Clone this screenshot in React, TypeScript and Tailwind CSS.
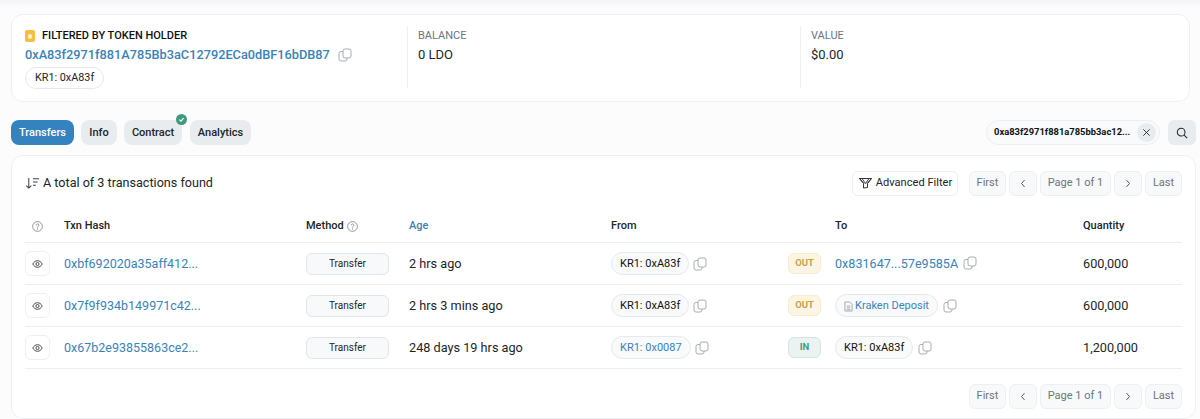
import React from "react";

const COLS = "grid grid-cols-[39px_242px_103px_202px_177px_47px_248px_1fr] items-center";

const Copy = ({ className = "" }: { className?: string }) => (
  <svg viewBox="0 0 14 14" className={`w-[14px] h-[14px] text-[#a8adb3] shrink-0 ${className}`} fill="none" stroke="currentColor" strokeWidth="1">
    <rect x="5" y="1" width="8" height="9" rx="2" />
    <path d="M5 3.500H3A2 2 0 0 0 1 5.500V11a2 2 0 0 0 2 2h4a2 2 0 0 0 2-2v-1" />
  </svg>
);

const Help = ({ className = "" }: { className?: string }) => (
  <svg viewBox="0 0 12 12" className={`w-[11px] h-[11px] text-[#6c757e] shrink-0 ${className}`} fill="none" stroke="currentColor" strokeWidth="0.800">
    <circle cx="6" cy="6" r="5.300" />
    <path d="M4.500 4.700a1.500 1.500 0 1 1 2.300 1.300c-.5.300-.8.600-.8 1.100" />
    <circle cx="6" cy="8.700" r="0.300" />
  </svg>
);

const Eye = () => (
  <svg viewBox="0 0 14 12" className="w-[11px] h-[10px]" fill="none" stroke="#3d4248" strokeWidth="1.200">
    <path d="M1 6c1.500-2.800 3.500-4.200 6-4.200S11.500 3.200 13 6c-1.500 2.800-3.500 4.200-6 4.200S2.500 8.800 1 6Z" />
    <circle cx="7" cy="6" r="2" />
  </svg>
);

const Pill = ({ children, blue }: { children: React.ReactNode; blue?: boolean }) => (
  <span className={`inline-flex items-center h-[23px] px-[8px] pt-px rounded-full border border-[#e6e9ec] bg-[#f9fafb] text-[11px] ${blue ? "text-[#3b82b8]" : "text-[#111]"}`}>
    {children}
  </span>
);

const PageBtns = () => {
  const cls = "h-[25px] flex items-center justify-center rounded-md border border-[#edf0f2] bg-[#f8f9fa] text-[11px] text-[#6c757e]";
  return (
    <div className="flex gap-[3px]">
      <span className={`${cls} w-[37px]`}>First</span>
      <span className={`${cls} w-[28px]`}>
        <svg viewBox="0 0 8 12" className="w-[6px] h-[9px]" fill="none" stroke="#495057" strokeWidth="1.300"><path d="M6 1.500 2 6l4 4.500" /></svg>
      </span>
      <span className={`${cls} w-[71px]`}>Page 1 of 1</span>
      <span className={`${cls} w-[28px]`}>
        <svg viewBox="0 0 8 12" className="w-[6px] h-[9px]" fill="none" stroke="#495057" strokeWidth="1.300"><path d="M2 1.500 6 6l-4 4.500" /></svg>
      </span>
      <span className={`${cls} w-[37px]`}>Last</span>
    </div>
  );
};

const Dir = ({ type }: { type: "OUT" | "IN" }) => (
  <span
    className={`inline-flex items-center justify-center w-[33px] h-[21px] rounded-md border text-[9.500px] font-bold ${
      type === "OUT" ? "bg-[#fdf5e3] border-[#f9ebcd] text-[#c9a04c]" : "bg-[#eaf3f1] border-[#d5e4e1] text-[#3f9a7e]"
    }`}
  >
    {type}
  </span>
);

const Row = ({ hash, from, dir, to, qty, age }: { hash: string; from: React.ReactNode; dir: "OUT" | "IN"; to: React.ReactNode; qty: string; age: string }) => (
  <div className={`${COLS} h-[42px] border-t border-[#edf0f2] text-[12.700px] text-[#212529]`}>
    <span className="w-[25px] h-[25px] rounded-md border border-[#edf0f2] bg-white flex items-center justify-center">
      <Eye />
    </span>
    <a className="text-[#3b82b8] text-[12.500px] pt-px">{hash}</a>
    <span className="w-[83px] h-[22px] rounded-md border border-[#e3e6e9] bg-[#f8f9fa] flex items-center justify-center text-[10px] text-[#212529]">
      Transfer
    </span>
    <span>{age}</span>
    <span className="flex items-center gap-[4px]">{from}<Copy /></span>
    <Dir type={dir} />
    <span className="flex items-center gap-[5px]">{to}<Copy /></span>
    <span>{qty}</span>
  </div>
);

export default function App() {
  return (
    <div className="w-[1200px] h-[419px] overflow-hidden bg-[#fcfcfd] font-['Roboto',sans-serif] flex flex-col">
      <div className="h-[8px] bg-gradient-to-b from-[#f3f4f6] to-[#fcfcfd]" />
      <div className="mt-[6px] ml-[11px] mr-[10px] h-[88px] bg-white rounded-xl border border-[#eef0f2] px-[13px] py-[11px] grid grid-cols-[383px_393px_1fr]">
        <div className="border-r border-[#eef0f2] h-[62px]">
          <div className="flex items-center gap-[7px] h-[14px] mt-[3px]">
            <span className="w-[10px] h-[12px] rounded-[2px] bg-[#f5bf3f] flex items-center justify-center">
              <span className="w-[4px] h-[5px] rounded-full bg-[#fdf0c8]" />
            </span>
            <span className="text-[11px] font-medium text-[#111]">FILTERED BY TOKEN HOLDER</span>
          </div>
          <div className="flex items-center gap-[8px] mt-[2px]">
            <span className="text-[12.750px] font-medium text-[#3b82b8]">0xA83f2971f881A785Bb3aC12792ECa0dBF16bDB87</span>
            <Copy />
          </div>
          <span className="inline-flex items-center mt-px h-[22px] px-[9px] rounded-full border border-[#e6e9ec] text-[10.800px] text-[#212529]">KR1: 0xA83f</span>
        </div>
        <div className="border-r border-[#eef0f2] h-[62px] pl-[10px] pt-[2px]">
          <div className="text-[11px] text-[#6c757e]">BALANCE</div>
          <div className="text-[13px] text-[#212529]">0 LDO</div>
        </div>
        <div className="pl-[10px] pt-[2px]">
          <div className="text-[11px] text-[#6c757e]">VALUE</div>
          <div className="text-[13px] text-[#212529]">$0.00</div>
        </div>
      </div>

      <div className="mt-[18px] ml-[11px] mr-[4px] h-[25px] flex items-center text-[11px] font-medium">
        <span className="w-[63px] h-[25px] pt-px rounded-lg bg-[#3482be] text-white flex items-center justify-center">Transfers</span>
        <span className="ml-[7px] w-[36px] h-[25px] pt-px rounded-lg bg-[#e9ecef] text-[#212529] flex items-center justify-center">Info</span>
        <span className="relative ml-[7px] w-[58px] h-[25px] pt-px rounded-lg bg-[#e9ecef] text-[#212529] flex items-center justify-center">
          Contract
          <span className="absolute -top-[6px] right-[-5px] w-[11px] h-[11px] rounded-full bg-[#3f9a7e] flex items-center justify-center">
            <svg viewBox="0 0 10 10" className="w-[7px] h-[7px]" fill="none" stroke="#fff" strokeWidth="1.600"><path d="M2 5.200 4.200 7.300 8 3" /></svg>
          </span>
        </span>
        <span className="ml-[8px] w-[61px] h-[25px] pt-px rounded-lg bg-[#e9ecef] text-[#212529] flex items-center justify-center">Analytics</span>
        <span className="ml-auto flex items-center w-[174px] h-[25px] rounded-full border border-[#eceff1] bg-[#f9fafb] pl-[7px] pr-[3px]">
          <span className="text-[9.400px] font-bold text-[#111] truncate w-[141px]">0xa83f2971f881a785bb3ac12...</span>
          <span className="ml-auto w-[19px] h-[19px] rounded-full bg-[#e9ecef] flex items-center justify-center">
            <svg viewBox="0 0 10 10" className="w-[9px] h-[9px]" fill="none" stroke="#212529" strokeWidth="1"><path d="M1.500 1.500l7 7M8.500 1.500l-7 7" /></svg>
          </span>
        </span>
        <span className="ml-[8px] w-[28px] h-[25px] rounded-md bg-[#e9ecef] flex items-center justify-center">
          <svg viewBox="0 0 14 14" className="w-[12px] h-[12px]" fill="none" stroke="#212529" strokeWidth="1.200"><circle cx="6" cy="6" r="4.500" /><path d="m9.500 9.500 3.500 3.500" /></svg>
        </span>
      </div>

      <div className="mt-[10px] ml-[11px] mr-[4px] flex-1 bg-white rounded-xl border border-[#eef0f2] px-[13px]">
        <div className="h-[54px] flex items-center">
          <svg viewBox="0 0 16 14" className="w-[15px] h-[13px]" fill="none" stroke="#3d4248" strokeWidth="1.100">
            <path d="M4 1v11M1.300 9.300 4 12l2.700-2.700M8.500 2h6.500M8.500 5.500h5M8.500 9h3" />
          </svg>
          <span className="ml-[3px] text-[12.600px] text-[#212529]">A total of 3 transactions found</span>
          <span className="ml-auto mr-[11px] flex items-center gap-[3px] h-[25px] w-[106px] justify-center rounded-md border border-[#edf0f2] bg-white text-[11.100px] text-[#212529]">
            <svg viewBox="0 0 14 12" className="w-[15px] h-[12px]" fill="none" stroke="#212529" strokeWidth="0.900" strokeLinejoin="round">
              <path d="M1 1.500h12L9 6.500v4l-4 .5V6.500ZM1 1.500l4.500 5M13 1.500 8.500 6.500M3.500 1.500 7 6.500l3.500-5" />
            </svg>
            Advanced Filter
          </span>
          <PageBtns />
        </div>
        <div className={`${COLS} h-[32px] text-[11px] font-medium text-[#212529]`}>
          <Help className="ml-[7px]" />
          <span>Txn Hash</span>
          <span className="flex items-center gap-[3px]">Method<Help /></span>
          <span className="text-[#3b82b8]">Age</span>
          <span>From</span>
          <span />
          <span>To</span>
          <span>Quantity</span>
        </div>
        <Row hash="0xbf692020a35aff412..." age="2 hrs ago" from={<Pill>KR1: 0xA83f</Pill>} dir="OUT" to={<span className="text-[#3b82b8] text-[12.600px] pt-px">0x831647...57e9585A</span>} qty="600,000" />
        <Row
          hash="0x7f9f934b149971c42..."
          age="2 hrs 3 mins ago"
          from={<Pill>KR1: 0xA83f</Pill>}
          dir="OUT"
          to={
            <Pill blue>
              <svg viewBox="0 0 10 12" className="w-[9px] h-[11px] mr-[2px]" fill="none" stroke="#8a9097" strokeWidth="0.800"><path d="M1 1h5.500L9 3.500V11H1ZM3 5.500h4M3 7.500h4M3 9.500h4" /></svg>
              Kraken Deposit
            </Pill>
          }
          qty="600,000"
        />
        <Row hash="0x67b2e93855863ce2..." age="248 days 19 hrs ago" from={<Pill blue>KR1: 0x0087</Pill>} dir="IN" to={<Pill>KR1: 0xA83f</Pill>} qty="1,200,000" />
        <div className="border-t border-[#edf0f2] pt-[15px] flex justify-end">
          <PageBtns />
        </div>
      </div>
    </div>
  );
}
